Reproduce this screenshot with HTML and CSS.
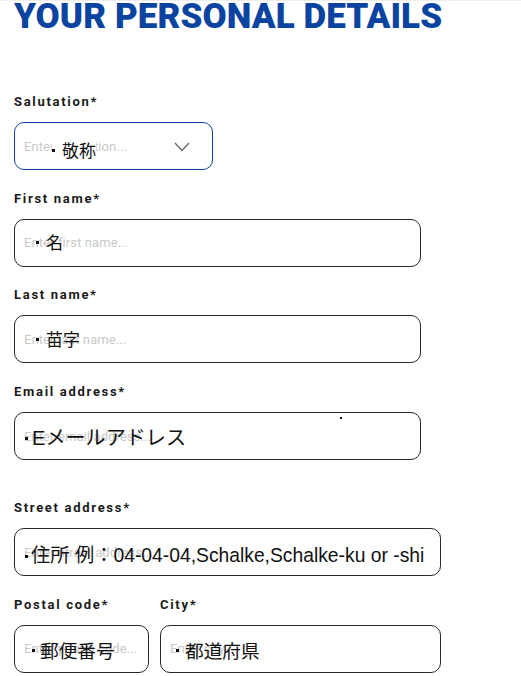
FILE: index.html
```html
<!DOCTYPE html>
<html lang="en">
<head>
<meta charset="utf-8">
<title>Your personal details</title>
<link rel="stylesheet" href="styles.css">
</head>
<body>
<div class="page">
  <h1 class="title">YOUR PERSONAL DETAILS</h1>
  <form class="form">
    <div class="field">
      <label class="label">Salutation*</label>
      <div class="control select">
        <span class="ph">Enter salutation...</span>
        <span class="tr tr-sal"><i class="dot"></i>敬称</span>
        <svg class="chev" width="16" height="10" viewBox="0 0 16 10"><polyline points="1,1 8,8.5 15,1" fill="none" stroke="#666" stroke-width="1.3"/></svg>
      </div>
    </div>
    <div class="field">
      <label class="label">First name*</label>
      <div class="control wide">
        <span class="ph">Enter first name...</span>
        <span class="tr tr-first"><i class="dot"></i>名</span>
      </div>
    </div>
    <div class="field">
      <label class="label">Last name*</label>
      <div class="control wide">
        <span class="ph">Enter last name...</span>
        <span class="tr tr-last"><i class="dot"></i>苗字</span>
      </div>
    </div>
    <div class="field">
      <label class="label">Email address*</label>
      <div class="control wide">
        <span class="ph">Enter email address...</span>
        <span class="tr tr-mail"><i class="dot"></i>Eメールアドレス</span>
        <i class="stray"></i>
      </div>
    </div>
    <div class="field section">
      <label class="label">Street address*</label>
      <div class="control street">
        <span class="ph">Enter street address...</span>
        <span class="tr tr-street"><i class="dot"></i>住所 例：04-04-04,Schalke,Schalke-ku or -shi</span>
      </div>
    </div>
    <div class="row">
      <div class="field postal">
        <label class="label">Postal code*</label>
        <div class="control">
          <span class="ph">Enter postal code...</span>
          <span class="tr tr-postal"><i class="dot"></i>郵便番号</span>
        </div>
      </div>
      <div class="field city">
        <label class="label">City*</label>
        <div class="control">
          <span class="ph">Enter city...</span>
          <span class="tr tr-city"><i class="dot"></i>都道府県</span>
        </div>
      </div>
    </div>
  </form>
</div>
</body>
</html>
```

FILE: styles.css
```css
html, body {
  margin: 0;
  padding: 0;
  background: #fff;
}
body {
  font-family: Roboto, "Liberation Sans", sans-serif;
  border-top: 1px solid #eeeeee;
  overflow: hidden;
}
.page {
  padding: 0 14px;
}
.title {
  margin: 0;
  font-family: Roboto, sans-serif;
  font-weight: 900;
  font-size: 35px;
  line-height: 31px;
  color: #0b44a0;
  letter-spacing: 0.1px;
}
.form {
  display: flex;
  flex-direction: column;
  gap: 20.7px;
  margin-top: 62px;
}
.field {
  display: flex;
  flex-direction: column;
  gap: 12px;
}
.section {
  margin-top: 19.3px;
}
.label {
  font-size: 13px;
  line-height: 16px;
  font-weight: 700;
  color: #1a1a1a;
  letter-spacing: 1.7px;
}
.control {
  position: relative;
  box-sizing: border-box;
  height: 48px;
  border: 1px solid #2a2a2a;
  border-radius: 10px;
  display: flex;
  align-items: center;
  padding: 0 9px;
  overflow: hidden;
}
.select {
  width: 199px;
  border-color: #0b44a0;
}
.wide { width: 407px; }
.street { width: 427px; }
.ph {
  font-size: 13px;
  color: #c9c9c9;
  white-space: nowrap;
  letter-spacing: 0.1px;
}
.tr {
  position: absolute;
  transform: translateY(-50%);
  font-family: "Noto Sans CJK JP", "Liberation Sans", sans-serif;
  font-size: 17px;
  line-height: 22px;
  color: #111;
  white-space: nowrap;
  display: flex;
  align-items: center;
}
.dot {
  display: inline-block;
  width: 3px;
  height: 3px;
  background: #111;
  margin-right: 7px;
  margin-top: 1px;
}
.tr-sal { left: 37px; top: 27px; background: #fff; }
.tr-first { left: 21px; top: 22px; }
.tr-last { left: 21px; top: 23px; }
.tr-mail { left: 10px; top: 25px; font-family: "Liberation Sans", "Noto Sans CJK JP", sans-serif; font-size: 20.1px; }
.tr-mail .dot { margin-right: 4px; }
.tr-street { left: 10px; top: 27px; font-family: "Liberation Sans", "Noto Sans CJK JP", sans-serif; font-size: 19.3px; }
.tr-street .dot { margin-right: 3px; }
.tr-postal { left: 17px; top: 24px; font-size: 18.7px; }
.tr-postal .dot { margin-right: 5px; }
.tr-city { left: 15px; top: 24px; font-size: 18.7px; }
.tr-city .dot { margin-right: 6px; }
.stray {
  position: absolute;
  left: 325px;
  top: 4px;
  width: 2px;
  height: 2px;
  background: #111;
}
.chev {
  position: absolute;
  left: 159px;
  top: 19px;
}
.row {
  display: flex;
  gap: 11px;
}
.postal .control { width: 135px; }
.city .control { width: 281px; }
```
